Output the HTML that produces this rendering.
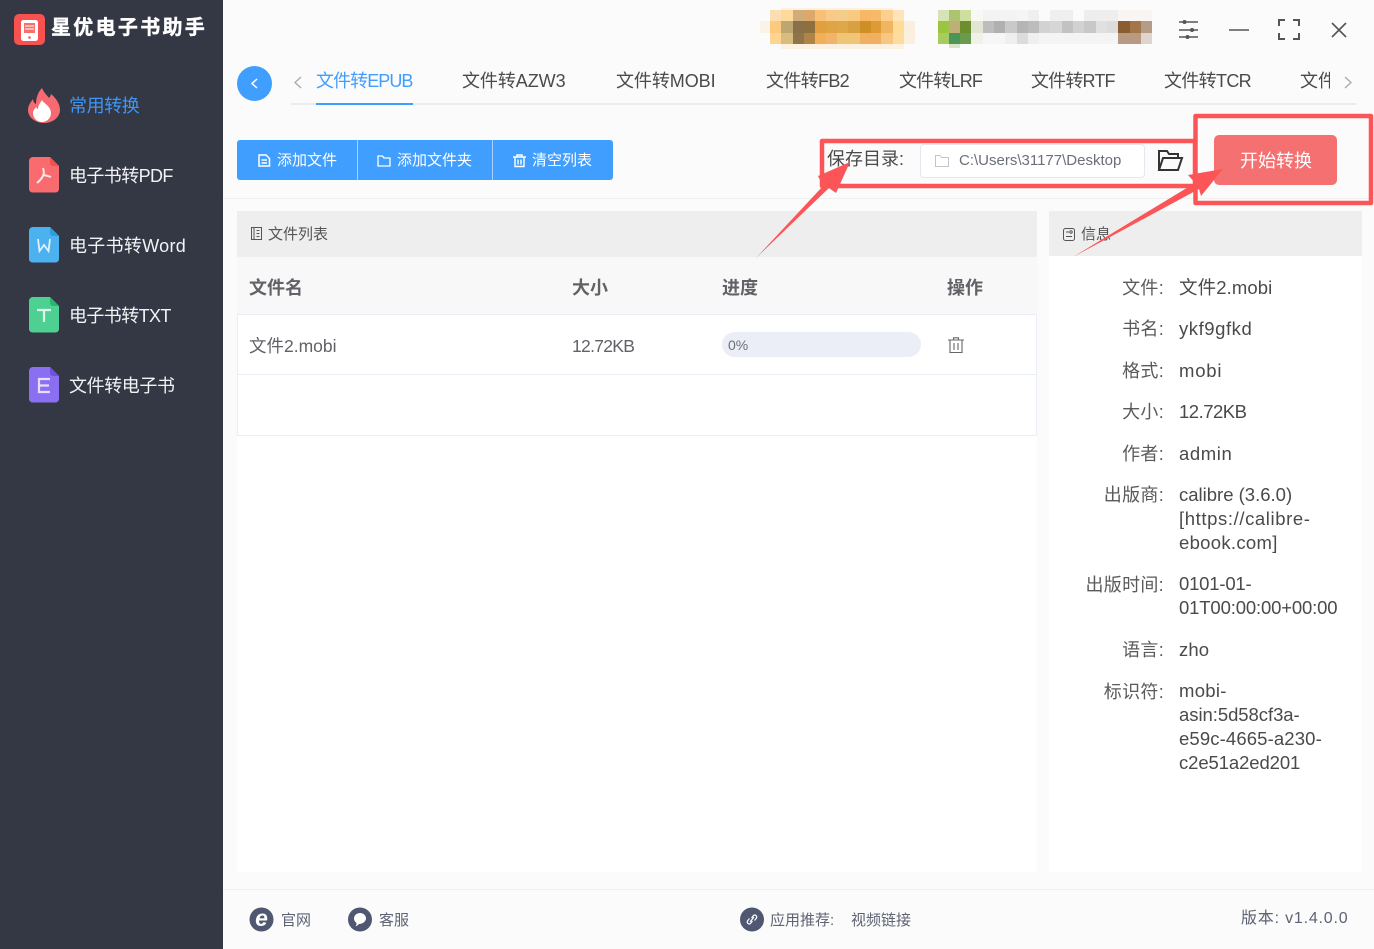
<!DOCTYPE html>
<html lang="zh"><head><meta charset="utf-8"><title>星优电子书助手</title>
<style>
*{box-sizing:border-box;margin:0;padding:0}
html,body{width:1374px;height:949px;overflow:hidden;background:#fbfbfb}
body{position:relative;font-family:"Liberation Sans","Noto Sans CJK SC",sans-serif;color:#4a4a4a}
.t{position:absolute;white-space:nowrap;line-height:24px}
.b{position:absolute}
svg{position:absolute;overflow:visible}
.side{left:0;top:0;width:223px;height:949px;background:#343845}
.nav{font-size:18px;color:#f2f3f5;left:69px;letter-spacing:-.6px}
.tab{font-size:18px;top:69px;color:#4a4a4a}
.btn{font-size:15px;color:#fff;top:149px}
.th{font-size:18px;font-weight:700;color:#606266;top:276px}
.td{font-size:17.5px;color:#606266;top:334px}
.k{font-size:18px;color:#5a5a5a;right:210px;text-align:right;letter-spacing:.3px}
.v{font-size:18.5px;color:#4a4a4a;left:1179px;letter-spacing:-.2px}
.f{font-size:15px;color:#5d6373;top:909px}
</style></head><body>

<div class="b side"></div>
<svg style="left:14px;top:14px" width="32" height="32" viewBox="0 0 32 32">
<rect width="31" height="31" rx="5" fill="#f8514f"/>
<rect x="7" y="6" width="17" height="21" rx="2.5" fill="#fff"/>
<rect x="10" y="9" width="11" height="10" fill="#f8706c"/>
<path d="M11 12h9M11 15h9" stroke="#fff" stroke-width="1"/>
<circle cx="15.500" cy="23.500" r="1.300" fill="#f8514f"/>
</svg>
<div class="t" style="left:51px;top:16px;font-size:20px;font-weight:700;color:#fff;letter-spacing:2.3px;-webkit-text-stroke:.4px #fff">星优电子书助手</div>

<svg style="left:27px;top:87px" width="34" height="36" viewBox="0 0 34 36">
<path d="M15 1c2 5 5 7 7 10 1-1 2-3 2-4 5 4 9 10 9 16 0 7-7 13-16 13S1 30 1 23c0-5 3-8 5-11 0 2 1 4 3 5 0-6 2-12 6-16z" fill="#f66a72"/>
<path d="M15 13c1 3 9 6 9 13 0 5-4 9-9 9s-9-4-9-9c0-3 2-4 3-6 1 1 1 2 2 2 0-3 2-6 4-9z" fill="#fff"/>
</svg>
<div class="t nav" style="top:94px;color:#3d96f6;letter-spacing:-.4px">常用转换</div>

<svg style="left:29px;top:157px" width="30" height="36" viewBox="0 0 30 36"><path d="M4 0h17l9 9v23a3.500 3.500 0 0 1-3.500 3.500H3.500A3.500 3.500 0 0 1 0 32V4a4 4 0 0 1 4-4z" fill="#f96b6e"/><path d="M21 0l9 9h-6a3 3 0 0 1-3-3z" fill="#f4504f"/><path d="M14 11c1 3 1 5 .5 7M14.500 18c-1.500 3-4 6-6.500 8M14.500 18c3 .5 5 1 7.500 2" stroke="#fde6e6" stroke-width="2" fill="none"/></svg>
<div class="t nav" style="top:164px">电子书转PDF</div>

<svg style="left:29px;top:227px" width="30" height="36" viewBox="0 0 30 36"><path d="M4 0h17l9 9v23a3.500 3.500 0 0 1-3.500 3.500H3.500A3.500 3.500 0 0 1 0 32V4a4 4 0 0 1 4-4z" fill="#4cb1ef"/><path d="M21 0l9 9h-6a3 3 0 0 1-3-3z" fill="#2f9ed8"/><path d="M9 12l1.500 12 4.500-6 4.500 6L21 12" stroke="#dff1fc" stroke-width="1.800" fill="none"/></svg>
<div class="t nav" style="top:234px;letter-spacing:.3px">电子书转Word</div>

<svg style="left:29px;top:297px" width="30" height="36" viewBox="0 0 30 36"><path d="M4 0h17l9 9v23a3.500 3.500 0 0 1-3.500 3.500H3.500A3.500 3.500 0 0 1 0 32V4a4 4 0 0 1 4-4z" fill="#4ed093"/><path d="M21 0l9 9h-6a3 3 0 0 1-3-3z" fill="#26b86f"/><path d="M8 13h14M15 13v12" stroke="#dff6ea" stroke-width="2.200" fill="none"/></svg>
<div class="t nav" style="top:304px">电子书转TXT</div>

<svg style="left:29px;top:367px" width="30" height="36" viewBox="0 0 30 36"><path d="M4 0h17l9 9v23a3.500 3.500 0 0 1-3.500 3.500H3.500A3.500 3.500 0 0 1 0 32V4a4 4 0 0 1 4-4z" fill="#8a6ff2"/><path d="M21 0l9 9h-6a3 3 0 0 1-3-3z" fill="#6f52dc"/><path d="M21 12H10v13h11M10 18.500h10" stroke="#e6dffc" stroke-width="2.200" fill="none"/></svg>
<div class="t nav" style="top:374px;letter-spacing:-.4px">文件转电子书</div>

<!-- mosaics -->
<svg style="left:0;top:0;shape-rendering:crispEdges" width="1374" height="60">
<g fill="#fdf1e2"><rect x="781" y="44" width="123" height="5"/><rect x="781" y="8" width="112" height="2"/></g>
<g><rect x="770" y="10" width="11" height="11" fill="#fcdeb3"/><rect x="781" y="10" width="12" height="11" fill="#fdd99c"/><rect x="793" y="10" width="11" height="11" fill="#cead78"/><rect x="804" y="10" width="11" height="11" fill="#dca86c"/><rect x="815" y="10" width="11" height="11" fill="#f9bf74"/><rect x="826" y="10" width="11" height="11" fill="#f9c987"/><rect x="837" y="10" width="11" height="11" fill="#f2ce8a"/><rect x="848" y="10" width="12" height="11" fill="#f8ca80"/><rect x="860" y="10" width="11" height="11" fill="#f7b765"/><rect x="871" y="10" width="10" height="11" fill="#f7b96a"/><rect x="881" y="10" width="12" height="11" fill="#fbcf8e"/><rect x="893" y="10" width="11" height="11" fill="#fee4b8"/>
<rect x="760" y="21" width="10" height="12" fill="#fbf3e6"/><rect x="770" y="21" width="11" height="12" fill="#fcc97f"/><rect x="781" y="21" width="12" height="12" fill="#bea670"/><rect x="793" y="21" width="11" height="12" fill="#89704a"/><rect x="804" y="21" width="11" height="12" fill="#8e7040"/><rect x="815" y="21" width="11" height="12" fill="#e0a040"/><rect x="826" y="21" width="11" height="12" fill="#dfa545"/><rect x="837" y="21" width="11" height="12" fill="#dea848"/><rect x="848" y="21" width="12" height="12" fill="#d8a040"/><rect x="860" y="21" width="11" height="12" fill="#cf8f25"/><rect x="871" y="21" width="10" height="12" fill="#dd9a35"/><rect x="881" y="21" width="12" height="12" fill="#efb55f"/><rect x="893" y="21" width="11" height="12" fill="#fddc98"/><rect x="904" y="21" width="11" height="12" fill="#faefdc"/>
<rect x="770" y="33" width="11" height="11" fill="#fdd591"/><rect x="781" y="33" width="12" height="11" fill="#d8bc7d"/><rect x="793" y="33" width="11" height="11" fill="#8e7449"/><rect x="804" y="33" width="11" height="11" fill="#b08445"/><rect x="815" y="33" width="11" height="11" fill="#f3ae5a"/><rect x="826" y="33" width="11" height="11" fill="#f0b56a"/><rect x="837" y="33" width="11" height="11" fill="#f1c577"/><rect x="848" y="33" width="12" height="11" fill="#f1c577"/><rect x="860" y="33" width="11" height="11" fill="#f1b05f"/><rect x="871" y="33" width="10" height="11" fill="#f1b05f"/><rect x="881" y="33" width="12" height="11" fill="#f8c682"/><rect x="893" y="33" width="11" height="11" fill="#fddc9f"/><rect x="904" y="33" width="11" height="11" fill="#fbf0e0"/></g>
<g><rect x="938" y="10" width="11" height="11" fill="#d5e3b5"/><rect x="949" y="10" width="11" height="11" fill="#acc46f"/><rect x="960" y="10" width="11" height="11" fill="#cde0a0"/><rect x="971" y="10" width="12" height="11" fill="#f8f8f5"/><rect x="983" y="10" width="34" height="11" fill="#f3f3f3"/><rect x="1017" y="10" width="11" height="11" fill="#f5f5f5"/><rect x="1028" y="10" width="11" height="11" fill="#efefef"/><rect x="1050" y="10" width="23" height="11" fill="#efefef"/><rect x="1084" y="10" width="34" height="11" fill="#eeeeee"/><rect x="1118" y="10" width="34" height="11" fill="#f8f5f2"/>
<rect x="938" y="21" width="11" height="12" fill="#9ac53f"/><rect x="949" y="21" width="11" height="12" fill="#bfae7a"/><rect x="960" y="21" width="11" height="12" fill="#6c8e2c"/><rect x="971" y="21" width="12" height="12" fill="#e0e6d2"/><rect x="983" y="21" width="11" height="12" fill="#bdbdbd"/><rect x="994" y="21" width="11" height="12" fill="#b0b0b0"/><rect x="1005" y="21" width="12" height="12" fill="#c9c9c9"/><rect x="1017" y="21" width="11" height="12" fill="#b5b5b5"/><rect x="1028" y="21" width="11" height="12" fill="#bcbcbc"/><rect x="1039" y="21" width="11" height="12" fill="#d2d2d2"/><rect x="1050" y="21" width="12" height="12" fill="#d6d6d6"/><rect x="1062" y="21" width="11" height="12" fill="#c2c2c2"/><rect x="1073" y="21" width="11" height="12" fill="#d2d2d2"/><rect x="1084" y="21" width="12" height="12" fill="#c8c8c8"/><rect x="1096" y="21" width="11" height="12" fill="#e0e0e0"/><rect x="1107" y="21" width="11" height="12" fill="#dcdcdc"/><rect x="1118" y="21" width="12" height="12" fill="#8b5c30"/><rect x="1130" y="21" width="11" height="12" fill="#a4754a"/><rect x="1141" y="21" width="11" height="12" fill="#b59c86"/>
<rect x="938" y="33" width="11" height="11" fill="#a6cb5e"/><rect x="949" y="33" width="11" height="11" fill="#4a9557"/><rect x="960" y="33" width="11" height="11" fill="#6a9a4e"/><rect x="971" y="33" width="12" height="11" fill="#f0f2ea"/><rect x="983" y="33" width="22" height="11" fill="#f6f6f6"/><rect x="1005" y="33" width="12" height="11" fill="#efefef"/><rect x="1017" y="33" width="11" height="11" fill="#dcdcdc"/><rect x="1028" y="33" width="11" height="11" fill="#efefef"/><rect x="1039" y="33" width="79" height="11" fill="#f4f4f4"/><rect x="1118" y="33" width="23" height="11" fill="#b89a82"/><rect x="1141" y="33" width="11" height="11" fill="#e0d5ce"/><rect x="949" y="44" width="11" height="4" fill="#d8e4c8"/></g>
</svg>

<!-- window controls -->
<svg style="left:1160px;top:5px" width="200" height="50" viewBox="0 0 200 50" fill="none" stroke="#555" stroke-width="1.500">
<path d="M19 17h19M19 25h19M19 32h19"/><circle cx="24.500" cy="17" r="2" fill="#555" stroke="none"/><circle cx="32" cy="25" r="2" fill="#555" stroke="none"/><circle cx="27.500" cy="32" r="2" fill="#555" stroke="none"/>
<path d="M69 25h20"/>
<path d="M119 21v-6h6M133 15h6v6M139 28v6h-6M125 34h-6v-6" stroke-width="2"/>
<path d="M172 18l14 14M186 18l-14 14" stroke-width="1.600"/>
</svg>

<!-- tabs -->
<div class="b" style="left:237px;top:66px;width:35px;height:35px;border-radius:50%;background:#409eff"></div>
<svg style="left:237px;top:66px" width="35" height="35" fill="none" stroke="#fff" stroke-width="1.500"><path d="M20 13l-5 4.500 5 4.500"/></svg>
<svg style="left:292px;top:75px" width="12" height="16" fill="none" stroke="#a5a8ad" stroke-width="1.300"><path d="M9 2L3 7.500 9 13"/></svg>
<div class="b" style="left:291px;top:103px;width:1065px;height:2px;background:#e8ebf0"></div>
<div class="b" style="left:316px;top:103px;width:97px;height:2px;background:#409eff"></div>
<div class="t tab" style="left:316px;color:#409eff;letter-spacing:-.93px">文件转EPUB</div>
<div class="t tab" style="left:462px;letter-spacing:-.07px">文件转AZW3</div>
<div class="t tab" style="left:616px;letter-spacing:-.07px">文件转MOBI</div>
<div class="t tab" style="left:766px;letter-spacing:-.67px">文件转FB2</div>
<div class="t tab" style="left:899px;letter-spacing:-.83px">文件转LRF</div>
<div class="t tab" style="left:1031px;letter-spacing:-.83px">文件转RTF</div>
<div class="t tab" style="left:1164px;letter-spacing:-.67px">文件转TCR</div>
<div class="t tab" style="left:1300px;width:30px;overflow:hidden">文件转</div>
<svg style="left:1342px;top:75px" width="12" height="16" fill="none" stroke="#a5a8ad" stroke-width="1.300"><path d="M3 2l6 5.500L3 13"/></svg>

<!-- toolbar -->
<div class="b" style="left:237px;top:140px;width:376px;height:40px;border-radius:3px;background:#409eff"></div>
<div class="b" style="left:357px;top:140px;width:1px;height:40px;background:#a9d2ff"></div>
<div class="b" style="left:492px;top:140px;width:1px;height:40px;background:#a9d2ff"></div>
<svg style="left:258px;top:154px" width="13" height="13" fill="none" stroke="#fff" stroke-width="1.500"><path d="M1 1h7l3.500 3.500V12H1zM3.500 6h5.500M3.500 9h5.500"/></svg>
<div class="t btn" style="left:277px">添加文件</div>
<svg style="left:377px;top:155px" width="14" height="12" fill="none" stroke="#fff" stroke-width="1.300"><path d="M1 1h4.500l1.500 2h6v8H1z"/></svg>
<div class="t btn" style="left:397px">添加文件夹</div>
<svg style="left:513px;top:154px" width="13" height="13" fill="none" stroke="#fff" stroke-width="1.400"><path d="M0 3h13M4 3V1h5v2M2 3v9.500h9V3M5 5.500v5M8 5.500v5"/></svg>
<div class="t btn" style="left:532px">清空列表</div>

<div class="t" style="left:827px;top:147px;font-size:18px;color:#4a4a4a">保存目录:</div>
<div class="b" style="left:920px;top:144px;width:225px;height:34px;background:#fff;border:1px solid #e4e7ed;border-radius:4px"></div>
<svg style="left:935px;top:155px" width="14" height="12" fill="none" stroke="#c0c4cc"><path d="M.5.500h4.500l1.500 2h7v9H.5z"/></svg>
<div class="t" style="left:959px;top:149px;font-size:15px;color:#6b6f76">C:\Users\31177\Desktop</div>
<svg style="left:1157px;top:148px" width="26" height="24" viewBox="0 0 26 24" fill="none" stroke="#333" stroke-width="2"><path d="M2 22V3h8l2 3h9v4M2 22l4-12h19l-4 12z"/></svg>

<div class="b" style="left:1214px;top:135px;width:123px;height:50px;border-radius:5px;background:#f56c6c;opacity:.97"></div>
<div class="t" style="left:1240px;top:149px;font-size:18px;color:#fff">开始转换</div>
<div class="b" style="left:223px;top:198px;width:1151px;height:1px;background:#eef0f2"></div>

<!-- file list panel -->
<div class="b" style="left:237px;top:211px;width:800px;height:661px;background:#fff"></div>
<div class="b" style="left:237px;top:211px;width:800px;height:46px;background:#eeeeee"></div>
<svg style="left:250px;top:227px" width="13" height="14" fill="none" stroke="#555"><path d="M1.500.500h10v12h-10zM4 .500v12M6.500 3.500h3M6.500 6.500h3M6.500 9.500h3"/></svg>
<div class="t" style="left:268px;top:223px;font-size:15px;color:#555">文件列表</div>
<div class="b" style="left:237px;top:257px;width:800px;height:58px;background:#f8f8f9;border-bottom:1px solid #ebeef5"></div>
<div class="t th" style="left:249px">文件名</div>
<div class="t th" style="left:572px">大小</div>
<div class="t th" style="left:722px">进度</div>
<div class="t th" style="left:947px">操作</div>
<div class="b" style="left:237px;top:315px;width:800px;height:121px;border:1px solid #ebeef5;border-top:0"></div>
<div class="b" style="left:238px;top:374px;width:798px;height:1px;background:#ebeef5"></div>
<div class="t td" style="left:249px">文件2.mobi</div>
<div class="t td" style="left:572px;letter-spacing:-.7px">12.72KB</div>
<div class="b" style="left:722px;top:332px;width:199px;height:25px;border-radius:13px;background:#ebeef6"></div>
<div class="t" style="left:728px;top:333px;font-size:14px;color:#6b6f76">0%</div>
<svg style="left:948px;top:337px" width="16" height="16" fill="none" stroke="#666" stroke-width="1.100"><path d="M0 3h16M5.500 3V.800h5V3M2 3v12.500h12V3M6 6v7M10 6v7"/></svg>

<!-- info panel -->
<div class="b" style="left:1049px;top:211px;width:313px;height:661px;background:#fff"></div>
<div class="b" style="left:1049px;top:211px;width:313px;height:45px;background:#eeeeee"></div>
<svg style="left:1063px;top:228px" width="13" height="13" fill="none" stroke="#555"><rect x=".5" y=".5" width="11" height="12" rx="2"/><path d="M3 4h3M3 8.500h6"/><circle cx="8" cy="4" r="1.200"/></svg>
<div class="t" style="left:1081px;top:223px;font-size:15px;color:#555">信息</div>

<div class="t k" style="top:276px">文件:</div><div class="t v" style="top:276px;letter-spacing:.1px">文件2.mobi</div>
<div class="t k" style="top:317px">书名:</div><div class="t v" style="top:317px;letter-spacing:.55px">ykf9gfkd</div>
<div class="t k" style="top:359px">格式:</div><div class="t v" style="top:359px;letter-spacing:.8px">mobi</div>
<div class="t k" style="top:400px">大小:</div><div class="t v" style="top:400px;letter-spacing:-.5px">12.72KB</div>
<div class="t k" style="top:442px">作者:</div><div class="t v" style="top:442px;letter-spacing:.6px">admin</div>
<div class="t k" style="top:483px">出版商:</div><div class="t v" style="top:483px"><span style="letter-spacing:0">calibre (3.6.0)</span><br><span style="letter-spacing:.6px">[https://calibre-</span><br><span style="letter-spacing:.3px">ebook.com]</span></div>
<div class="t k" style="top:573px">出版时间:</div><div class="t v" style="top:572px"><span>0101-01-</span><br><span style="letter-spacing:-.15px">01T00:00:00+00:00</span></div>
<div class="t k" style="top:638px">语言:</div><div class="t v" style="top:638px;letter-spacing:.1px">zho</div>
<div class="t k" style="top:680px">标识符:</div><div class="t v" style="top:679px"><span style="letter-spacing:.3px">mobi-</span><br><span style="letter-spacing:-.05px">asin:5d58cf3a-</span><br><span style="letter-spacing:.13px">e59c-4665-a230-</span><br><span style="letter-spacing:-.1px">c2e51a2ed201</span></div>

<!-- footer -->
<div class="b" style="left:223px;top:889px;width:1151px;height:1px;background:#eef0f2"></div>
<svg style="left:249px;top:907px" width="25" height="25"><circle cx="12.500" cy="12.500" r="12" fill="#4f5870"/><text x="12.500" y="19" text-anchor="middle" font-size="23" font-weight="700" font-style="italic" fill="#fff" font-family="Liberation Sans">e</text></svg>
<div class="t f" style="left:281px">官网</div>
<svg style="left:348px;top:907px" width="24" height="25"><circle cx="12" cy="12.500" r="12" fill="#4f5870"/><path d="M12 6c4 0 6 3 6 5.500S15 17 11 17c-1 1-2 2-3.500 2 1-1 1-2 1-3C7 15 6 13 6 11.500 6 8.500 8.500 6 12 6z" fill="#fff"/></svg>
<div class="t f" style="left:379px">客服</div>
<svg style="left:740px;top:907px" width="24" height="25"><circle cx="12" cy="12.500" r="12" fill="#4f5870"/><path d="M10 15l4-5M9.500 11.500l-2 2.500a2 2 0 0 0 3 2.500l2-2.500M14.500 13.500l2-2.500a2 2 0 0 0-3-2.500l-2 2.500" fill="none" stroke="#fff" stroke-width="1.200"/></svg>
<div class="t f" style="left:770px">应用推荐:</div>
<div class="t f" style="left:851px">视频链接</div>
<div class="t" style="left:1241px;top:907px;font-size:16px;color:#5d6373;letter-spacing:.8px">版本: v1.4.0.0</div>

<!-- red annotations -->
<svg style="left:0;top:0" width="1374" height="949" fill="none">
<path d="M822 141H1195V186H822Z" stroke="#fb5558" stroke-width="4.500" stroke-linejoin="round"/>
<path d="M1195.500 116H1371V203H1195.500Z" stroke="#fb5558" stroke-width="4.500" stroke-linejoin="round"/>
<path d="M850 162L818 176 823 186 756 258 829 188 836 193Z" fill="#fb5558"/>
<path d="M1223 169L1188 175 1195 183 1073 257 1199 189 1201 196Z" fill="#fb5558"/>
</svg>
</body></html>
